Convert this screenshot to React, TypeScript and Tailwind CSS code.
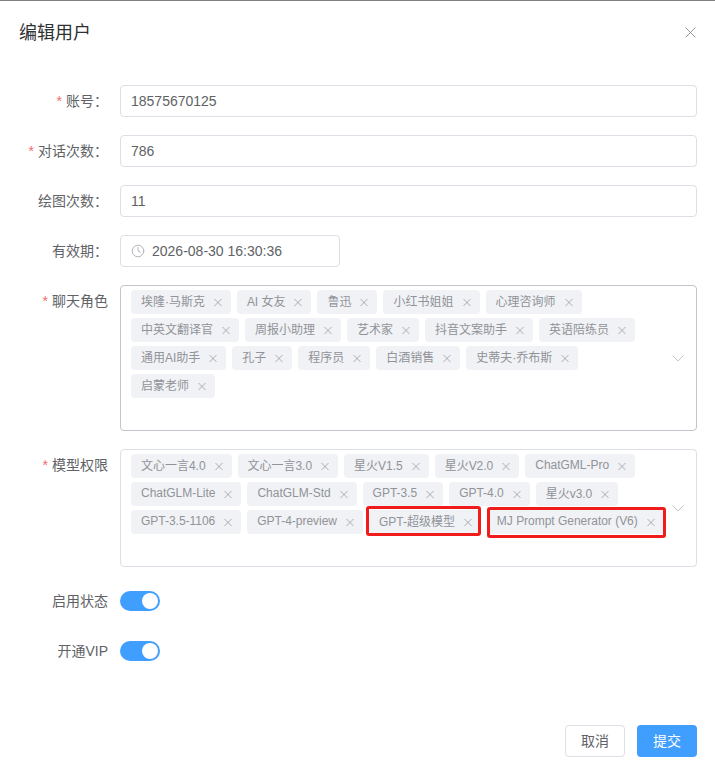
import { Clock } from 'lucide-react'

const roles = [
  '埃隆·马斯克', 'AI 女友', '鲁迅', '小红书姐姐', '心理咨询师',
  '中英文翻译官', '周报小助理', '艺术家', '抖音文案助手', '英语陪练员',
  '通用AI助手', '孔子', '程序员', '白酒销售', '史蒂夫·乔布斯',
  '启蒙老师',
]

const models = [
  '文心一言4.0', '文心一言3.0', '星火V1.5', '星火V2.0', 'ChatGML-Pro',
  'ChatGLM-Lite', 'ChatGLM-Std', 'GPT-3.5', 'GPT-4.0', '星火v3.0',
  'GPT-3.5-1106', 'GPT-4-preview', 'GPT-超级模型', 'MJ Prompt Generator (V6)',
]

// the two hand-drawn red marks in the picture, they don't sit evenly round the tags
const marks: Record<string, string> = {
  'GPT-超级模型': '-left-[3px] right-0 -top-1 -bottom-0.5',
  'MJ Prompt Generator (V6)': 'left-0 -right-0.5 -top-[3px] -bottom-1',
}

function Close({ size = 9, color = '#909399' }: { size?: number; color?: string }) {
  return (
    <svg width={size} height={size} viewBox="0 0 9 9" fill="none" stroke={color} strokeWidth={0.8}>
      <path d="M0.5 0.5L8.5 8.5M8.5 0.5L0.5 8.5" />
    </svg>
  )
}

function Label({ text, required, colon = true }: { text: string; required?: boolean; colon?: boolean }) {
  return (
    <div className="w-[120px] shrink-0 pr-3 text-right text-sm leading-8 text-[#606266]">
      {required && <span className="mr-1 text-[#f56c6c]">*</span>}
      {text}
      {colon && '：'}
    </div>
  )
}

function TextField({ label, value, required }: { label: string; value: string; required?: boolean }) {
  return (
    <div className="mb-[18px] flex">
      <Label text={label} required={required} />
      <div className="flex h-8 flex-1 items-center rounded border border-[#dcdfe6] px-[10px] text-sm text-[#606266]">
        {value}
      </div>
    </div>
  )
}

function Tag({ text }: { text: string }) {
  const hasLatin = /[A-Za-z0-9·]/.test(text)
  const allLatin = /^[\x00-\x7f]+$/.test(text)
  return (
    <span className="relative flex h-6 items-center rounded bg-[#f0f2f5] pl-[10px] pr-[9px] text-xs text-[#909399]">
      <span className={`${hasLatin ? 'tracking-[-0.02px]' : ''} ${allLatin ? '-translate-y-px' : ''}`}>{text}</span>
      <span className="ml-[9px] flex w-2 justify-center pt-px">
        <Close />
      </span>
      {marks[text] && (
        <span className={`absolute rounded-[3px] border-[3px] border-[#f01c1c] ${marks[text]}`} />
      )}
    </span>
  )
}

function TagSelect({ label, tags, height, active }: { label: string; tags: string[]; height: string; active?: boolean }) {
  return (
    <div className="mb-[18px] flex">
      <Label text={label} required colon={false} />
      <div className={`relative flex flex-1 flex-wrap content-start gap-x-[6px] gap-y-1 rounded border pl-[10px] pr-[31px] pt-1 ${height} ${active ? 'border-[#c0c4cc]' : 'border-[#dcdfe6]'}`}>
        {tags.map((t) => (
          <Tag key={t} text={t} />
        ))}
        <svg className="absolute right-3 top-1/2 -mt-[3px]" width="12" height="7" viewBox="0 0 12 7" fill="none" stroke="#c0c4cc">
          <path d="M0.5 0.5L6 6L11.5 0.5" />
        </svg>
      </div>
    </div>
  )
}

function Toggle({ label }: { label: string }) {
  return (
    <div className="mb-[18px] flex items-center">
      <Label text={label} colon={false} />
      <div className="flex h-8 items-center">
        <div className="flex h-5 w-10 items-center justify-end rounded-full bg-[#409eff] pr-0.5">
          <div className="h-4 w-4 rounded-full bg-white" />
        </div>
      </div>
    </div>
  )
}

export default function App() {
  return (
    <div className="flex h-[776px] w-[715px] flex-col border-t border-[#808080] bg-white font-['Liberation_Sans','Noto_Sans_CJK_SC',sans-serif]">
      {/* Header */}
      <div className="flex h-[62px] shrink-0 items-center justify-between pl-[19px] pr-[19px]">
        <h2 className="pt-0.5 text-lg text-[#303133]">编辑用户</h2>
        <Close size={11} />
      </div>

      {/* Form */}
      <div className="flex-1 pr-[18px] pt-[22px]">
        <TextField label="账号" value="18575670125" required />
        <TextField label="对话次数" value="786" required />
        <TextField label="绘图次数" value="11" />
        <div className="mb-[18px] flex">
          <Label text="有效期" />
          <div className="flex h-8 w-[220px] items-center rounded border border-[#dcdfe6] pl-[10px] text-sm text-[#606266]">
            <Clock size={14} strokeWidth={1.5} className="mr-[7px] text-[#a8abb2]" />
            2026-08-30 16:30:36
          </div>
        </div>
        <TagSelect label="聊天角色" tags={roles} height="h-[146px]" active />
        <TagSelect label="模型权限" tags={models} height="h-[118px]" />
        <Toggle label="启用状态" />
        <Toggle label="开通VIP" />
      </div>

      {/* Footer */}
      <div className="flex shrink-0 justify-end gap-3 pb-[19px] pr-[18px]">
        <button className="h-8 w-[60px] rounded border border-[#dcdfe6] bg-white text-sm text-[#606266]">取消</button>
        <button className="h-8 w-[60px] rounded bg-[#409eff] text-sm text-white">提交</button>
      </div>
    </div>
  )
}
